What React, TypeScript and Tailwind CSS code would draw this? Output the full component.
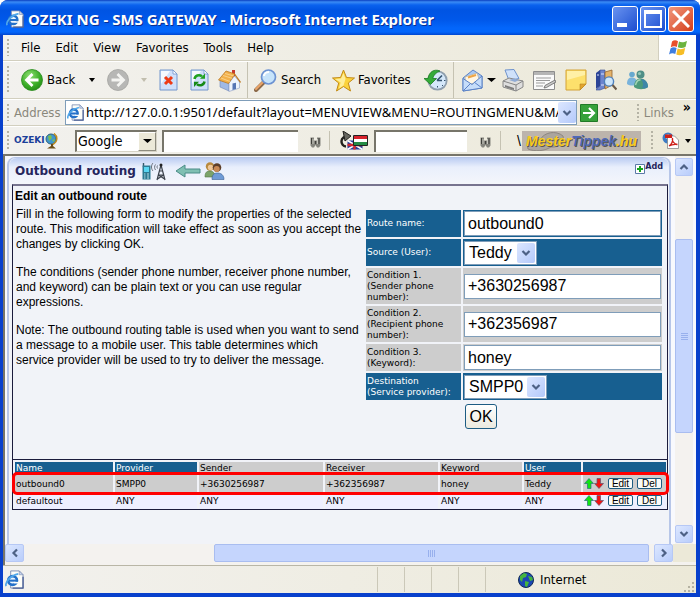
import React from "react";

const UI = "font-['DejaVu_Sans_Condensed','Noto_Sans',sans-serif]";

function IeIcon({ size = 20 }: { size?: number }) {
  return (
    <svg width={size} height={size} viewBox="0 0 20 20" aria-hidden="true" className="shrink-0">
      <path d="M6 1h9l4 4v14H6z" fill="#fdfdf8" stroke="#7d8fb5" />
      <path d="M15 1v4h4z" fill="#c9d6ef" stroke="#7d8fb5" strokeWidth=".7" />
      <path d="M8 19h11V7" fill="none" stroke="#4a5f95" strokeWidth="1.400" />
      <circle cx="8" cy="11" r="4.600" fill="#eaf5ff" stroke="#2471c9" strokeWidth="2.800" />
      <path d="M4 11.200h9" stroke="#2471c9" strokeWidth="2.200" />
      <path d="M9.500 12.500h5v1.700h-5z" fill="#fdfdf8" />
      <path d="M1.200 17C-.5 13 6 5.500 14 4" fill="none" stroke="#50a7ea" strokeWidth="1.800" />
    </svg>
  );
}

function Grip({ className = "" }: { className?: string }) {
  return <span className={`w-[2px] shrink-0 self-stretch my-1 bg-[repeating-linear-gradient(#b5b3a5_0_2px,transparent_2px_4px)] ${className}`} />;
}

function Divider({ className = "" }: { className?: string }) {
  return <span className={`w-px shrink-0 self-stretch bg-[#c5c2b2] ${className}`} />;
}

function Caret({ className = "fill-black", size = 7 }: { className?: string; size?: number }) {
  return (
    <svg width={size} height="4" viewBox="0 0 7 4" preserveAspectRatio="none" className={`shrink-0 ${className}`} aria-hidden="true">
      <path d="M0 0h7L3.500 4z" />
    </svg>
  );
}

function Chevron({ dir = "down" }: { dir?: "down" | "up" | "left" | "right" }) {
  const d = {
    down: "M1.500 3 5 6.500 8.500 3",
    up: "M1.500 7 5 3.500 8.500 7",
    left: "M7 1.500 3.500 5 7 8.500",
    right: "M3 1.500 6.500 5 3 8.500",
  }[dir];
  return (
    <svg width="10" height="10" viewBox="0 0 10 10" fill="none" stroke="#4d6185" strokeWidth="2.200" aria-hidden="true">
      <path d={d} />
    </svg>
  );
}

function BackIcon() {
  return (
    <svg width="22" height="22" viewBox="0 0 22 22" className="shrink-0" aria-hidden="true">
      <defs>
        <radialGradient id="bk" cx=".4" cy=".3" r=".8">
          <stop offset="0" stopColor="#8fdf72" />
          <stop offset=".6" stopColor="#3aad27" />
          <stop offset="1" stopColor="#1f8414" />
        </radialGradient>
      </defs>
      <circle cx="11" cy="11" r="10.500" fill="url(#bk)" stroke="#2a8c1d" strokeWidth=".8" />
      <path d="M11.500 5 5.500 11l6 6M6 11h11.500" fill="none" stroke="#fff" strokeWidth="2.800" />
    </svg>
  );
}

function ForwardIcon() {
  return (
    <svg width="22" height="22" viewBox="0 0 22 22" className="shrink-0" aria-hidden="true">
      <circle cx="11" cy="11" r="10.500" fill="#b7b7b5" stroke="#a3a3a0" strokeWidth=".8" />
      <path d="M10.500 5l6 6-6 6M16 11H4.500" fill="none" stroke="#f4f4f1" strokeWidth="2.800" />
    </svg>
  );
}

function PageShape() {
  return (
    <>
      <path d="M1 1h13l4 4v16H1z" fill="#cfe0fa" stroke="#7396cc" />
      <path d="M14 1v4h4z" fill="#fff" stroke="#7396cc" strokeWidth=".8" />
      <path d="M2 2h9L2 15z" fill="#fff" opacity=".8" />
    </>
  );
}

function StopIcon() {
  return (
    <svg width="19" height="22" viewBox="0 0 19 22" aria-hidden="true">
      <PageShape />
      <path d="M6 8l7 7M13 8l-7 7" stroke="#ee3a14" strokeWidth="3" />
    </svg>
  );
}

function RefreshIcon() {
  return (
    <svg width="19" height="22" viewBox="0 0 19 22" aria-hidden="true">
      <PageShape />
      <path d="M4.500 10C5 6.500 9 5 12 7.300" fill="none" stroke="#21a121" strokeWidth="2.500" />
      <path d="M10 9.800h5V4.500z" fill="#21a121" />
      <path d="M14.500 12.500C14 16 10 17.500 7 15.200" fill="none" stroke="#168a16" strokeWidth="2.500" />
      <path d="M9 12.700H4V18z" fill="#168a16" />
    </svg>
  );
}

function HomeIcon() {
  return (
    <svg width="23" height="23" viewBox="0 0 23 23" aria-hidden="true">
      <path d="M14 1h3v7h-3z" fill="#c9362a" />
      <path d="M2 11l9 3v8l-9-4z" fill="#9fb9e6" stroke="#6e87b8" strokeWidth=".6" />
      <path d="M11 14l5.500-7 5 6v6L11 22.500z" fill="#eef3fc" stroke="#8a9cc4" strokeWidth=".6" />
      <path d="M.5 11 8 2l9 3-6.500 9.500z" fill="#f2b04a" stroke="#bd7a25" strokeWidth=".8" />
      <path d="M16.500 5l6 8.500" stroke="#bd7a25" strokeWidth="1.300" />
      <path d="M3 9 12 12.500M5 6.500l9 2.800M7 4.500 16 7" stroke="#fbd896" strokeWidth=".8" />
      <path d="M14.500 14.500l3.500-.8v6.300l-3.500 1z" fill="#5675b4" />
    </svg>
  );
}

function SearchIcon() {
  return (
    <svg width="23" height="23" viewBox="0 0 23 23" className="shrink-0" aria-hidden="true">
      <path d="M10 13 2 21" stroke="#8d6a4a" strokeWidth="4" strokeLinecap="round" />
      <path d="M9 13 2 20" stroke="#e9a468" strokeWidth="2" strokeLinecap="round" />
      <circle cx="14.500" cy="8" r="7" fill="#c7e4fb" stroke="#6d93d2" strokeWidth="1.700" />
      <path d="M10 7c0-2 2-4 5-4" stroke="#fff" strokeWidth="2.200" fill="none" />
    </svg>
  );
}

function StarIcon() {
  return (
    <svg width="23" height="23" viewBox="0 0 23 23" className="shrink-0" aria-hidden="true">
      <path d="M11.500 1l3 7.500 8 .5-6.200 5 2.200 8-7-4.500-7 4.500 2.200-8L.5 9l8-.5z" fill="#fbd23c" stroke="#c38b17" />
      <path d="M11.500 4l2 6-2 6.500-4.500 3 1.600-6L3 10l6-.6z" fill="#feee9a" />
    </svg>
  );
}

function HistoryIcon() {
  return (
    <svg width="24" height="22" viewBox="0 0 24 22" aria-hidden="true">
      <circle cx="13.500" cy="11.500" r="9.200" fill="#d5e8fa" stroke="#8f9fae" strokeWidth="1.800" />
      <path d="M13 11.500l5-5M13 11.500h5" stroke="#35546f" strokeWidth="1.600" />
      <path d="M13.500 17v1.500M20 11.500h1.500M18 16l1 1" stroke="#35546f" />
      <path d="M16 2C10-.5 5 3 4 9.500H0l6.500 6 6-6H8.700C9.500 6 12 3.500 16 2z" fill="#34ab38" stroke="#1b7a22" strokeWidth=".8" />
    </svg>
  );
}

function MailIcon() {
  return (
    <svg width="21" height="23" viewBox="0 0 21 23" aria-hidden="true">
      <path d="M1 9 11 1l9 6v12l-19 3z" fill="#a9c9f4" stroke="#5b82c6" />
      <path d="M3 8l12-4 3 9-14 3z" fill="#fff6e4" stroke="#b7a98c" strokeWidth=".6" />
      <path d="M6 8.500 14 6" stroke="#efa545" strokeWidth="2" />
      <path d="M1 9.500l9 6L20 7v12L1 22z" fill="#c6ddfa" stroke="#5b82c6" />
      <path d="M1 22l8-8M20 19l-8-6" stroke="#5b82c6" />
    </svg>
  );
}

function PrinterIcon() {
  return (
    <svg width="22" height="23" viewBox="0 0 22 23" aria-hidden="true">
      <path d="M3 1l9-.5 5 9-10 2z" fill="#cfe1fa" stroke="#6e92cc" />
      <path d="M1 12l6-3 14 3v6l-7 4-13-4z" fill="#dedede" stroke="#868686" />
      <path d="M1 12l13 4 7-4M14 16v6" stroke="#868686" fill="none" />
      <path d="M3 16l9 3v2l-9-3z" fill="#7d7d7d" />
      <path d="M7 11l5-1.500 5 1.500-4 2z" fill="#8faad4" />
    </svg>
  );
}

function EditPageIcon() {
  return (
    <svg width="23" height="19" viewBox="0 0 23 19" aria-hidden="true">
      <path d="M.5.5h21v18H.5z" fill="#fafafa" stroke="#8d8d8d" />
      <path d="M1 1h20v3H1z" fill="#b5b5b5" />
      <path d="M3 7h15M3 9.500h14M3 12h9M3 15h7" stroke="#9b9b9b" />
      <path d="M12 14.500 22 9l1 2-9.500 5.500-2.500.5z" fill="#c8c8c8" stroke="#666" strokeWidth=".8" />
    </svg>
  );
}

function NoteIcon() {
  return (
    <svg width="22" height="22" viewBox="0 0 22 22" aria-hidden="true">
      <path d="M1 1h20v14l-6 6H1z" fill="#fde06c" stroke="#d3a236" />
      <path d="M2 2h18v4L2 11z" fill="#fff0a6" />
      <path d="M21 15l-6 6v-6z" fill="#e2a530" stroke="#b98420" strokeWidth=".6" />
    </svg>
  );
}

function ResearchIcon() {
  return (
    <svg width="22" height="22" viewBox="0 0 22 22" aria-hidden="true">
      <path d="M1 4l4-3v16l-4 3z" fill="#2d4597" />
      <path d="M5 1h5v18l-5 2H1l4-4z" fill="#6c84cf" stroke="#33478e" strokeWidth=".6" />
      <path d="M10 3l7-2v15l-7 4z" fill="#e5b36a" stroke="#93632d" strokeWidth=".8" />
      <path d="M2 6h2M6 5h3M6 16h3" stroke="#dbe3fb" />
      <circle cx="14" cy="12.500" r="4.600" fill="#cfe7fb" stroke="#4e81bf" strokeWidth="1.400" />
      <path d="M17.500 16l4 4.500" stroke="#6b5a48" strokeWidth="2.200" />
    </svg>
  );
}

function MessengerIcon() {
  return (
    <svg width="23" height="20" viewBox="0 0 23 20" aria-hidden="true">
      <circle cx="6" cy="4.500" r="2.800" fill="#67a9cf" />
      <path d="M1 14c0-5 2-6.500 5-6.500s5 2 5 6.500c-3 2-7 2-10 0z" fill="#79b3dc" />
      <circle cx="14.500" cy="4.500" r="4" fill="#4f8f87" />
      <circle cx="13.500" cy="3.500" r="1.600" fill="#94c8b8" />
      <path d="M8 17c0-6 3-8.500 6.500-8.500s7.500 3 7.500 8.500c-4 3-10 3-14 0z" fill="#4c9a7b" />
      <path d="M16 18c2-3 1-6-1-9 4 0 7 3 7 8-1 1-3 2-6 1z" fill="#3e86a8" />
      <path d="M9.500 15c1-4 2.500-5.500 5-5" stroke="#a7d6b7" strokeWidth="1.500" fill="none" />
    </svg>
  );
}

function WindowsFlag() {
  return (
    <svg width="20" height="18" viewBox="0 0 20 18" aria-hidden="true">
      <path d="M4 2.500C6 .8 8 1 10 2.200L8.800 8C7 7 5 7 2.800 8.300z" fill="#e8502b" />
      <path d="M11 2.600c2 1 4.500 1.200 8-.6L17.500 8c-3 1.500-5.500 1.300-7.700.3z" fill="#6cb33e" />
      <path d="M2.500 9.400C4.500 8 6.700 8.100 8.600 9L7.300 15c-2-1-4-1-6.300.4z" fill="#3f7ee0" />
      <path d="M9.600 9.500c2 1 4.700 1.100 7.600-.4l-1.400 6c-2.700 1.600-5.500 1.500-7.500.4z" fill="#f6bd26" />
    </svg>
  );
}

function OzekiGlobe() {
  return (
    <svg width="13" height="16" viewBox="0 0 13 16" aria-hidden="true">
      <circle cx="6" cy="6" r="5" fill="#3f96cf" stroke="#31617c" />
      <path d="M3 3l3-1 1 3-3 3zM7 7l3-1-1 3z" fill="#7bc051" />
      <path d="M9 .5c4 3 4 8.500-2 11.500" stroke="#bf8b1b" strokeWidth="1.500" fill="none" />
      <path d="M6 11h2v2l3 2.500H2L6 13z" fill="#6b4d17" />
    </svg>
  );
}

function Binoculars() {
  return (
    <svg width="11" height="11" viewBox="0 0 11 11" aria-hidden="true">
      <path d="M.5.5h3.500v3h3v-3h3.500v8L9 10.500H7L5.500 8 4 10.500H2L.5 8.500z" fill="#85857e" />
      <path d="M1.500 1v6M5.500 4v3M9 1v6" stroke="#3f3f3b" />
      <path d="M3 2v5M7.500 2v5" stroke="#c5c5bd" />
    </svg>
  );
}

function TranslateIcon() {
  return (
    <svg width="31" height="20" viewBox="0 0 31 20" aria-hidden="true">
      <path d="M9 5.500A5 5 0 1 0 8 15.500" fill="none" stroke="#22221f" strokeWidth="2.400" />
      <path d="M5 0l8 5-6 5z" fill="#66665f" stroke="#22221f" />
      <path d="M9.500 9.500h15v9h-15z" fill="#243c9c" />
      <path d="M9.500 9.500l15 9M24.500 9.500l-15 9" stroke="#fff" strokeWidth="1.600" />
      <path d="M9.500 14h15M16.500 9.500v9" stroke="#d6262c" strokeWidth="2.400" />
      <path d="M15.500 4.500h14v10h-14z" fill="#fff" stroke="#222" />
      <path d="M16 5h13v3H16z" fill="#d8232c" />
      <path d="M16 11h13v3H16z" fill="#258c46" />
    </svg>
  );
}

function PdfIcon() {
  return (
    <svg width="17" height="17" viewBox="0 0 17 17" className="shrink-0" aria-hidden="true">
      <circle cx="6" cy="6" r="5.500" fill="#3c7bc4" />
      <path d="M3 3l4-1 1 3-4 2z" fill="#96c3ea" />
      <path d="M5.500 4h7l4 4v8.500h-11z" fill="#fff" stroke="#888" strokeWidth=".8" />
      <path d="M3 2.500h7v3.500H3z" fill="#cf2119" />
      <path d="M7 14c3-2 4-5 3.500-8-1 3 1.500 6 5 6.500-3-.5-6 0-8.500 1.500z" fill="none" stroke="#cf2119" strokeWidth="1.300" />
    </svg>
  );
}

function PhoneTowerIcon() {
  return (
    <svg width="24" height="19" viewBox="0 0 24 19" aria-hidden="true">
      <path d="M1.500 1v4" stroke="#355868" strokeWidth="1.400" />
      <path d="M.5 3.500h8v14h-8z" fill="#2d7a92" />
      <path d="M2 5h5v5H2z" fill="#59d6f2" />
      <path d="M2 12h1.500M5 12h2M2 14h1.500M5 14h2M2 16h1.500M5 16h2" stroke="#b6dde5" />
      <path d="M11 1c-2 2-2 6 0 8M13.500 2.500c-1.200 1.500-1.200 4 0 5.500M15.500 3.500c-.6 1-.6 2 0 3" stroke="#6a717d" fill="none" />
      <path d="M19 3l-4 15M19 3l4 15M17.500 9h3M16.500 13h5M15.500 17l6-4M22.500 17l-6-4" stroke="#3c424c" strokeWidth="1.200" />
      <circle cx="19" cy="3" r="1.500" fill="#222" />
    </svg>
  );
}

function UsersIcon() {
  return (
    <svg width="21" height="18" viewBox="0 0 21 18" aria-hidden="true">
      <circle cx="6" cy="4.500" r="4.200" fill="#b98a3d" />
      <circle cx="6.500" cy="5.500" r="2.700" fill="#f0c898" />
      <path d="M1 15c0-5 2-6 5-6s5 2 5 6z" fill="#7ba36a" stroke="#557747" strokeWidth=".6" />
      <circle cx="13" cy="5.500" r="4.300" fill="#5e3f28" />
      <circle cx="12.700" cy="7" r="3" fill="#c98a55" />
      <path d="M8 17.500c0-5 2-6.500 5.500-6.500s6.500 2 6.500 6.500z" fill="#6f9bd6" stroke="#395f96" strokeWidth=".6" />
    </svg>
  );
}

function GlobeIcon() {
  return (
    <svg width="16" height="16" viewBox="0 0 16 16" aria-hidden="true">
      <circle cx="8" cy="8" r="7.500" fill="#1b46b4" stroke="#102a52" />
      <path d="M2 4l4-3 3 1-1 3-3 1-1 4-2-2zM10 4l4 1 1 3-3 1zM7 9l4 1-2 5-2-1z" fill="#45b53c" />
    </svg>
  );
}

function MoveArrows() {
  return (
    <span className="flex shrink-0">
      <button aria-label="Move up">
        <svg width="10" height="11" viewBox="0 0 10 11" aria-hidden="true">
          <path d="M5 .5 9.500 5.500H7V10.500H3.500V5.500H.5z" fill="#12e512" stroke="#2a6d7d" strokeWidth=".7" />
        </svg>
      </button>
      <button aria-label="Move down">
        <svg width="10" height="11" viewBox="0 0 10 11" aria-hidden="true">
          <path d="M5 10.500 .5 5.500H3V.5H6.500V5.500H9.500z" fill="#f21212" stroke="#5d5470" strokeWidth=".7" />
        </svg>
      </button>
    </span>
  );
}

function ScrollButton({ dir, className = "" }: { dir: "up" | "down" | "left" | "right"; className?: string }) {
  return (
    <button
      aria-label={`Scroll ${dir}`}
      className={`flex shrink-0 items-center justify-center rounded-xs border border-[#b6c8f5] bg-linear-to-br from-[#dce7ff] to-[#b9cdfb] ${className}`}
    >
      <Chevron dir={dir} />
    </button>
  );
}

function XpSelect({ id, value, className }: { id: string; value: string; className: string }) {
  return (
    <div className={`relative h-6 border border-[#7f9db9] bg-white ${className}`}>
      <select id={id} className="block h-full w-full appearance-none bg-transparent pl-1 text-base leading-5 outline-none">
        <option>{value}</option>
      </select>
      <span className="pointer-events-none absolute inset-y-px right-px flex w-[18px] items-center justify-center rounded-xs bg-linear-to-br from-[#dce7ff] to-[#b4c9fa]">
        <Chevron />
      </span>
    </div>
  );
}

const fields = [
  { id: "route", label: "Route name:", value: "outbound0", tone: "blue", kind: "text", h: "h-[27px]" },
  { id: "source", label: "Source (User):", value: "Teddy", tone: "blue", kind: "select", h: "h-[27px]", w: "w-[73px]" },
  { id: "c1", label: "Condition 1.\n(Sender phone\nnumber):", value: "+3630256987", tone: "grey", kind: "text", h: "h-[36px]" },
  { id: "c2", label: "Condition 2.\n(Recipient phone\nnumber):", value: "+362356987", tone: "grey", kind: "text", h: "h-[36px]" },
  { id: "c3", label: "Condition 3.\n(Keyword):", value: "honey", tone: "grey", kind: "text", h: "h-[27px]" },
  { id: "dest", label: "Destination\n(Service provider):", value: "SMPP0", tone: "blue", kind: "select", h: "h-[27px]", w: "w-[83px]" },
];

function RouteForm() {
  return (
    <form className="mt-6 flex w-[296px] shrink-0 flex-col gap-[2px] font-['Liberation_Sans',Arial,sans-serif]" onSubmit={(e) => e.preventDefault()}>
      {fields.map((f) => {
        const tone = f.tone === "blue" ? "bg-[#175f90] text-white" : "bg-[#cdcdcd] text-black";
        return (
          <div key={f.id} className={`grid grid-cols-[95px_1fr] gap-[2px] ${f.h}`}>
            <label htmlFor={f.id} className={`flex items-center whitespace-pre pl-px font-['DejaVu_Sans',Verdana,sans-serif] text-[9px] leading-[11px] ${tone}`}>
              {f.label}
            </label>
            <div className={`flex items-center px-px ${tone}`}>
              {f.kind === "text" ? (
                <input id={f.id} defaultValue={f.value} className="h-[25px] w-full border border-[#7f9db9] bg-white px-[3px] text-base leading-5 text-black outline-none" />
              ) : (
                <XpSelect id={f.id} value={f.value} className={`text-black ${f.w}`} />
              )}
            </div>
          </div>
        );
      })}
      <button className="ml-[99px] mt-[2px] h-[25px] w-8 rounded-[3px] border border-[#1d5c83] bg-linear-to-b from-white to-[#ebe9df] text-base leading-5">OK</button>
    </form>
  );
}

const heads = ["Name", "Provider", "Sender", "Receiver", "Keyword", "User", ""];
const rows = [
  ["outbound0", "SMPP0", "+3630256987", "+362356987", "honey", "Teddy"],
  ["defaultout", "ANY", "ANY", "ANY", "ANY", "ANY"],
];

function SmallButton({ children }: { children: string }) {
  return <button className="h-[11px] w-[25px] shrink-0 rounded-xs border border-[#1d5c83] bg-[#fbfbf8] font-['Liberation_Sans',Arial,sans-serif] text-[10px] leading-[9px]">{children}</button>;
}

function RouteTable() {
  return (
    <table className="w-full table-fixed border-separate border-spacing-x-[2px] border-spacing-y-0 font-['DejaVu_Sans',Verdana,sans-serif] text-[9px]">
      <colgroup>
        <col className="w-[98px]" />
        <col className="w-[82px]" />
        <col className="w-[124px]" />
        <col className="w-[113px]" />
        <col className="w-[82px]" />
        <col className="w-[57px]" />
        <col className="w-[83px]" />
      </colgroup>
      <thead>
        <tr className="h-[13px] leading-3">
          {heads.map((h, i) => (
            <th key={i} className={`border-b border-[#f1f3f8] p-0 pl-px text-left font-normal ${i > 1 && i < 5 ? "bg-[#cdcdcd]" : "bg-[#175f90] text-white"}`}>
              {h}
            </th>
          ))}
        </tr>
      </thead>
      <tbody>
        {rows.map((r, i) => (
          <tr key={r[0]} className={i === 0 ? "relative h-[17px] rounded-xs bg-[#f4f4f8] outline-3 outline-offset-0 outline-[#ff0000]" : "h-[17px] bg-[#eeefff]"}>
            {r.map((c, j) => (
              <td key={j} className={`p-0 pl-px leading-3 ${i === 0 ? "bg-[#cdcdcd]" : ""}`}>
                {c}
              </td>
            ))}
            <td className={`p-0 pl-px ${i === 0 ? "bg-[#cdcdcd]" : ""}`}>
              <span className="flex items-center gap-1">
                <MoveArrows />
                <SmallButton>Edit</SmallButton>
                <SmallButton>Del</SmallButton>
              </span>
            </td>
          </tr>
        ))}
      </tbody>
    </table>
  );
}

function TitleBar() {
  return (
    <header className="flex h-[35px] shrink-0 items-center bg-[linear-gradient(#0a3fc0_0,#3a8bf5_2px,#0a62ee_5px,#0054e3_10px,#0058ea_20px,#0366fb_28px,#0366fb_32px,#0046cf_35px)] pl-[6px] pr-[6px] pt-[3px]">
      <IeIcon size={18} />
      <h1 className="ml-1 flex-1 truncate font-['Noto_Sans','Open_Sans',sans-serif] text-[15px] font-bold text-white [text-shadow:1px_1px_#0a2d90]">OZEKI NG - SMS GATEWAY - Microsoft Internet Explorer</h1>
      <div className="flex gap-[2px]">
        <button aria-label="Minimize" className="flex size-[26px] items-end rounded-[3px] border border-white bg-linear-to-br from-[#6a93f0] to-[#1c4bcf] p-[4px]">
          <span className="h-1 w-[10px] bg-white" />
        </button>
        <button aria-label="Maximize" className="flex size-[26px] items-center justify-center rounded-[3px] border border-white bg-linear-to-br from-[#6a93f0] to-[#1c4bcf]">
          <span className="size-[18px] border-2 border-t-4 border-white" />
        </button>
        <button aria-label="Close" className="flex size-[26px] items-center justify-center rounded-[3px] border border-white bg-linear-to-br from-[#f0957a] to-[#d33a12]">
          <svg width="18" height="18" viewBox="0 0 18 18" aria-hidden="true">
            <path d="M1 1l16 16M17 1 1 17" stroke="#fff" strokeWidth="3" />
          </svg>
        </button>
      </div>
    </header>
  );
}

function MenuBar() {
  return (
    <nav className="flex h-[26px] shrink-0 items-stretch border-b border-[#d2cfbf] pl-1 text-[13px]">
      <Grip />
      <div className="ml-3 flex flex-1 items-center gap-[15px]">
        {["File", "Edit", "View", "Favorites", "Tools", "Help"].map((m) => (
          <button key={m}>{m}</button>
        ))}
      </div>
      <span className="flex w-[38px] items-center justify-center border-l border-[#d2cfbf] bg-white">
        <WindowsFlag />
      </span>
    </nav>
  );
}

function ToolBar() {
  return (
    <div className="flex h-[38px] shrink-0 items-center border-b border-[#d2cfbf] border-t border-t-white pl-1 text-[13px]">
      <Grip />
      <button className="ml-3 flex w-[74px] items-center gap-1">
        <BackIcon />
        <span className="flex-1 text-left">Back</span>
        <Caret size={6} />
      </button>
      <button aria-label="Forward" className="ml-3 flex w-[40px] items-center justify-between">
        <ForwardIcon />
        <Caret size={6} className="fill-[#c1beae]" />
      </button>
      <button aria-label="Stop" className="ml-3"><StopIcon /></button>
      <button aria-label="Refresh" className="ml-3"><RefreshIcon /></button>
      <button aria-label="Home" className="ml-[9px]"><HomeIcon /></button>
      <Divider className="ml-[6px]" />
      <button className="ml-[6px] flex w-[78px] items-center gap-1">
        <SearchIcon />
        Search
      </button>
      <button className="flex w-[92px] items-center gap-[3px]">
        <StarIcon />
        Favorites
      </button>
      <button aria-label="History"><HistoryIcon /></button>
      <Divider className="ml-[5px]" />
      <button aria-label="Mail" className="ml-[8px] flex items-center gap-1">
        <MailIcon />
        <Caret size={9} />
      </button>
      <button aria-label="Print" className="ml-[6px]"><PrinterIcon /></button>
      <button aria-label="Edit page" className="ml-[9px]"><EditPageIcon /></button>
      <button aria-label="Notes" className="ml-[9px]"><NoteIcon /></button>
      <button aria-label="Research" className="ml-2"><ResearchIcon /></button>
      <button aria-label="Messenger" className="ml-[9px]"><MessengerIcon /></button>
    </div>
  );
}

function AddressBar() {
  return (
    <div className="flex h-[27px] shrink-0 items-center border-b border-[#d2cfbf] border-t border-t-white pl-1 text-[13px]">
      <Grip />
      <label htmlFor="address" className="ml-[5px] w-[51px] shrink-0 text-[#8a887c]">Address</label>
      <div className="flex h-[25px] min-w-0 flex-1 items-center border border-[#7f9db9] bg-white pl-px">
        <IeIcon size={17} />
        <input
          id="address"
          defaultValue="http://127.0.0.1:9501/default?layout=MENUVIEW&MENU=ROUTINGMENU&MAINMENU"
          className="ml-[2px] min-w-0 flex-1 bg-transparent font-['Noto_Sans',sans-serif] text-[13px] outline-none"
        />
        <button aria-label="Show addresses" className="flex h-[21px] w-[18px] items-center justify-center rounded-xs bg-linear-to-br from-[#dce7ff] to-[#b4c9fa]">
          <Chevron />
        </button>
      </div>
      <button className="ml-[3px] flex w-[57px] items-center gap-1">
        <svg width="18" height="18" viewBox="0 0 18 18" aria-hidden="true">
          <path d="M.5.5h17v17H.5z" fill="#36a13a" stroke="#217a27" />
          <path d="M9 4l5 5-5 5M13.500 9H3" fill="none" stroke="#fff" strokeWidth="2.200" />
        </svg>
        Go
      </button>
      <Grip />
      <button className="ml-[5px] w-[34px] text-left text-[#8a887c]">Links</button>
      <button aria-label="More links" className="ml-[5px] mr-[5px] mb-3 text-sm font-bold leading-3">»</button>
    </div>
  );
}

function OzekiBar() {
  return (
    <div className="flex h-[28px] shrink-0 items-center border-t border-white pl-1">
      <Grip />
      <span className="ml-[5px] flex w-[61px] items-center font-['DejaVu_Sans',Verdana,sans-serif] text-[9px] font-bold text-[#1b3f9a]">
        OZEKI
        <OzekiGlobe />
      </span>
      <div className="relative h-[22px] w-[82px] border border-t-2 border-l-2 border-[#d6d3c6] border-t-[#77756a] border-l-[#77756a] bg-white">
        <select aria-label="Search engine" className="block h-full w-full appearance-none bg-transparent pl-px text-sm leading-4 outline-none">
          <option>Google</option>
        </select>
        <span className="pointer-events-none absolute inset-y-0 right-0 flex w-[18px] items-center justify-center border border-[#8e8c80] border-t-white border-l-white bg-[#ece9d8]">
          <Caret size={9} />
        </span>
      </div>
      <input aria-label="Search text" className="ml-[5px] h-[22px] w-[136px] min-w-0 border-t-2 border-l-2 border-[#77756a] bg-white outline-none" />
      <button aria-label="Find" className="ml-3 mt-1"><Binoculars /></button>
      <Divider className="ml-2 my-1" />
      <button aria-label="Translate" className="ml-2"><TranslateIcon /></button>
      <input aria-label="Translate text" className="ml-[5px] h-[22px] w-[93px] min-w-0 border-t-2 border-l-2 border-[#77756a] bg-white outline-none" />
      <button aria-label="Find translation" className="ml-[13px] mt-1"><Binoculars /></button>
      <Divider className="ml-[9px] my-1" />
      <span className="ml-4 w-[5px] font-['Liberation_Sans',Arial,sans-serif] text-sm">\</span>
      <a href="#mester" className="relative flex h-5 w-[119px] items-center justify-center bg-[#bcb4ac] text-[#f8cc1c] [text-shadow:1px_1px_#5d564e]">
        <svg width="40" height="20" viewBox="0 0 40 20" className="absolute left-1 top-0" aria-hidden="true">
          <path d="M2 18c-3-8 6-10 12-9C18 1 30-1 37 5c2 6-4 12-12 11-6 4-16 5-23 2z" fill="#aba59e" stroke="#8d8780" />
        </svg>
        <span className="relative font-['Liberation_Sans',Arial,sans-serif] text-sm font-bold italic">Mester<span className="text-[#4d68b8]">Tippek</span>.hu</span>
      </a>
      <Grip className="ml-[10px]" />
      <button aria-label="Convert to PDF" className="ml-[9px] flex items-center gap-[6px]">
        <PdfIcon />
        <Caret size={6} />
      </button>
    </div>
  );
}

function RoutingPage() {
  return (
    <main className="mt-px ml-[2px] mr-1 flex min-w-0 flex-1 flex-col rounded-t-lg border-x-2 border-t border-[#b7c6e8] bg-[#f1f3f8] font-['Liberation_Sans',Arial,sans-serif] text-black">
      <div className="flex h-[26px] shrink-0 items-center rounded-t-lg bg-linear-to-b from-[#bccdf2] via-[#e9effc] via-35% to-[#f4f6fb] pl-[6px] pr-[6px]">
        <h2 className="w-[127px] whitespace-nowrap font-['DejaVu_Sans',Verdana,sans-serif] text-xs font-bold text-[#25255c]">Outbound routing</h2>
        <PhoneTowerIcon />
        <svg width="26" height="14" viewBox="0 0 26 14" className="ml-[9px] mr-[3px]" aria-hidden="true">
          <path d="M1 7l9-6v4h15v4H10v4z" fill="#7fbfb2" stroke="#4a8b87" />
        </svg>
        <UsersIcon />
        <a href="#add" className="mb-2 ml-auto flex items-center font-['DejaVu_Sans_Condensed','DejaVu_Sans',sans-serif] text-[9px] font-bold text-[#25255c]">
          <svg width="10" height="10" viewBox="0 0 10 10" aria-hidden="true" className="mt-1">
            <path d="M.5.5h9v9h-9z" fill="#fff" stroke="#5b7aa8" />
            <path d="M5 2v6M2 5h6" stroke="#16a51d" strokeWidth="2" />
          </svg>
          Add
        </a>
      </div>
      <section className="ml-[3px] mr-px border border-[#1b1b3c] border-t-2 border-t-[#77748f]">
        <div className="flex min-h-[273px] pl-[2px] pr-[5px]">
          <div className="flex-1 whitespace-nowrap pt-[3px] text-xs leading-[15px]">
            <h3 className="mb-[3px] font-bold">Edit an outbound route</h3>
            <div className="flex flex-col gap-[13px] pl-px">
              <p>Fill in the following form to modify the properties of the selected<br />route. This modification will take effect as soon as you accept the<br />changes by clicking OK.</p>
              <p>The conditions (sender phone number, receiver phone number,<br />and keyword) can be plain text or you can use regular<br />expressions.</p>
              <p>Note: The outbound routing table is used when you want to send<br />a message to a mobile user. This table determines which<br />service provider will be used to try to deliver the message.</p>
            </div>
          </div>
          <RouteForm />
        </div>
        <div className="border-t border-[#1b1b3c] pt-[2px]">
          <RouteTable />
        </div>
      </section>
    </main>
  );
}

function VerticalScrollbar() {
  return (
    <div className="flex w-[18px] shrink-0 flex-col bg-[#f4f2ef] pt-[2px] pb-px">
      <ScrollButton dir="up" className="h-[18px]" />
      <div className="flex flex-1 flex-col">
        <span className="flex-[63]" />
        <span className="flex flex-[193] flex-col items-center justify-center gap-px rounded-xs border border-[#a9bdf0] bg-[#c5d5fd]">
          {[0, 1, 2, 3].map((i) => (
            <i key={i} className="h-px w-[7px] bg-[#98b0ed]" />
          ))}
        </span>
        <span className="flex-[92]" />
      </div>
      <ScrollButton dir="down" className="h-[18px]" />
    </div>
  );
}

function HorizontalScrollbar() {
  return (
    <div className="flex h-[21px] shrink-0 bg-[#f4f2ef] pb-[3px]">
      <ScrollButton dir="left" className="w-[19px]" />
      <div className="flex flex-1">
        <span className="flex-[190]" />
        <span className="flex flex-[434] items-center justify-center gap-px rounded-xs border border-[#a9bdf0] bg-[#c5d5fd]">
          {[0, 1, 2, 3].map((i) => (
            <i key={i} className="h-[7px] w-px bg-[#98b0ed]" />
          ))}
        </span>
        <span className="flex-[5]" />
      </div>
      <ScrollButton dir="right" className="w-[19px]" />
      <span className="w-[23px] bg-[#ece9d8]" />
    </div>
  );
}

function StatusBar() {
  return (
    <footer className="flex h-[28px] shrink-0 items-center border-t border-[#b9b6a6] pl-[2px] text-[13px]">
      <IeIcon size={19} />
      <span className="flex-1" />
      {[0, 1, 2, 3, 4].map((i) => (
        <span key={i} className="my-px w-[27px] self-stretch border-l border-[#cbc8b8]" />
      ))}
      <span className="flex w-[171px] items-center gap-[6px] pl-[6px]">
        <GlobeIcon />
        Internet
      </span>
      <svg width="12" height="12" viewBox="0 0 12 12" className="mr-px mt-auto" fill="#b5b2a2" aria-hidden="true">
        <path d="M9 1h2v2H9zM5 5h2v2H5zM9 5h2v2H9zM1 9h2v2H1zM5 9h2v2H5zM9 9h2v2H9z" />
      </svg>
    </footer>
  );
}

export default function App() {
  return (
    <div className={`flex min-h-screen flex-col overflow-hidden rounded-t-lg border-b-4 border-[#0840cc] bg-[#0840cc] text-black ${UI}`}>
      <TitleBar />
      <div className="mx-[3px] mr-1 flex flex-1 flex-col bg-linear-to-r from-[#f2f1ee] to-[#ece9d8]">
        <MenuBar />
        <ToolBar />
        <AddressBar />
        <OzekiBar />
        <div className="flex flex-1 flex-col border-t-2 border-l-2 border-[#77756a]">
          <div className="flex flex-1 bg-[#f8f9fd] pr-[3px]">
            <RoutingPage />
            <VerticalScrollbar />
          </div>
          <HorizontalScrollbar />
        </div>
        <StatusBar />
      </div>
    </div>
  );
}
